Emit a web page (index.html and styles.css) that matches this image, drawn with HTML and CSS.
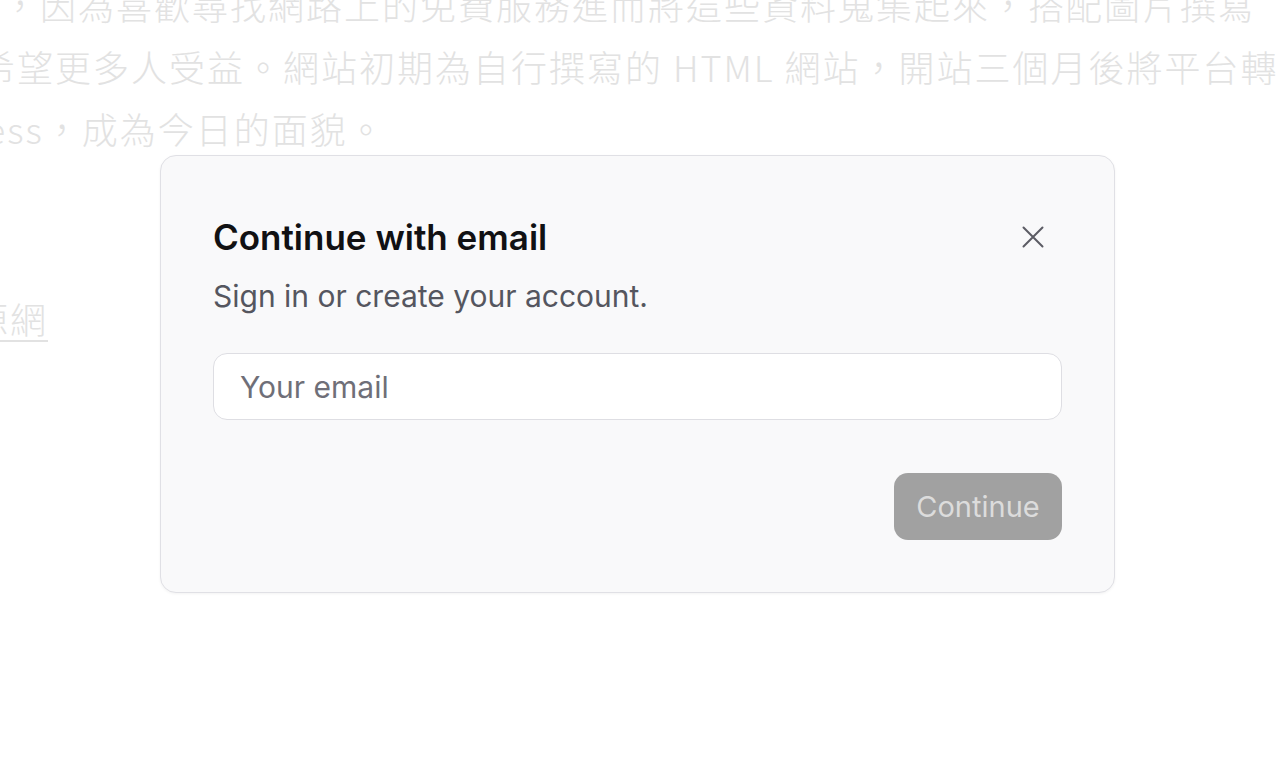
FILE: index.html
```html
<!DOCTYPE html>
<html lang="zh-Hant">

<head>
    <meta charset="UTF-8">
    <meta name="viewport" content="width=device-width, initial-scale=1.0">
    <title>免費資源網路社群</title>
    <link rel="stylesheet" href="styles.css">
</head>

<body>
    <div class="page">
        <div class="article">
            <p class="line line-one">生，因為喜歡尋找網路上的免費服務進而將這些資料蒐集起來，搭配圖片撰寫</p>
            <p class="line line-two">希望更多人受益。網站初期為自行撰寫的 HTML 網站，開站三個月後將平台轉</p>
            <p class="line line-three">rdPress，成為今日的面貌。</p>
            <p class="line line-link"><a href="#">資源網</a></p>
        </div>
    </div>

    <div class="modal">
        <div class="modal-head">
            <h2 class="modal-title">Continue with email</h2>
            <button class="close" type="button" aria-label="Close">
                <svg width="22" height="22" viewBox="0 0 22 22" fill="none" stroke="currentColor" stroke-width="2" stroke-linecap="round">
                    <path d="M1.5 1.5 L20.5 20.5 M20.5 1.5 L1.5 20.5" />
                </svg>
            </button>
        </div>
        <p class="modal-sub">Sign in or create your account.</p>
        <input class="email" type="email" placeholder="Your email">
        <div class="modal-foot">
            <button class="continue" type="button" disabled>Continue</button>
        </div>
    </div>
</body>

</html>
```

FILE: styles.css
```css
body {
    margin: 0;
    background: #ffffff;
    font-family: Inter, "Noto Sans", sans-serif;
    overflow: hidden;
}

.page {
    height: 768px;
}

/* faded article behind the dialog */
.article {
    margin-top: -27px;
    font-family: "Noto Sans CJK TC", "Noto Sans", sans-serif;
    font-size: 36px;
    font-weight: 300;
    letter-spacing: 2px;
    line-height: 62px;
    color: #e2e2e2;
    white-space: nowrap;
}

.line {
    margin: 0;
}

.line-one {
    margin-left: -36px;
}

.line-two {
    margin-left: -21px;
}

.line-three {
    margin-left: -91px;
}

.line-link {
    margin-top: 128px;
    margin-left: -66px;
}

.line-link a {
    color: #e2e2e2;
    text-decoration: underline;
    text-underline-offset: 6px;
    text-decoration-thickness: 2px;
}

/* dialog */
.modal {
    position: absolute;
    top: 155px;
    left: 160px;
    width: 955px;
    box-sizing: border-box;
    padding: 61px 52px 52px 52px;
    background: #f9f9fa;
    border: 1px solid #e0e0e5;
    border-radius: 16px;
    box-shadow: 0 1px 3px rgba(0, 0, 0, 0.05);
}

.modal-head {
    display: flex;
    align-items: center;
    justify-content: space-between;
}

.modal-title {
    margin: 0;
    font-size: 35px;
    font-weight: 600;
    line-height: 40px;
    color: #111113;
}

.close {
    display: flex;
    align-items: center;
    justify-content: center;
    width: 40px;
    height: 40px;
    margin-right: 9px;
    padding: 0;
    border: none;
    background: none;
    color: #5c5c64;
}

.modal-sub {
    margin: 21px 0 0;
    font-size: 30px;
    line-height: 36px;
    color: #55565f;
}

.email {
    display: block;
    width: 100%;
    box-sizing: border-box;
    height: 67px;
    margin-top: 39px;
    padding: 0 26px;
    font-family: inherit;
    font-size: 30px;
    background: #ffffff;
    border: 1px solid #dedee3;
    border-radius: 14px;
    outline: none;
}

.email::placeholder {
    color: #6f6f78;
}

.modal-foot {
    display: flex;
    justify-content: flex-end;
    margin-top: 53px;
}

.continue {
    width: 168px;
    height: 67px;
    font-family: inherit;
    font-size: 29px;
    color: #dcdcdc;
    background: #a1a1a1;
    border: none;
    border-radius: 14px;
}
```
